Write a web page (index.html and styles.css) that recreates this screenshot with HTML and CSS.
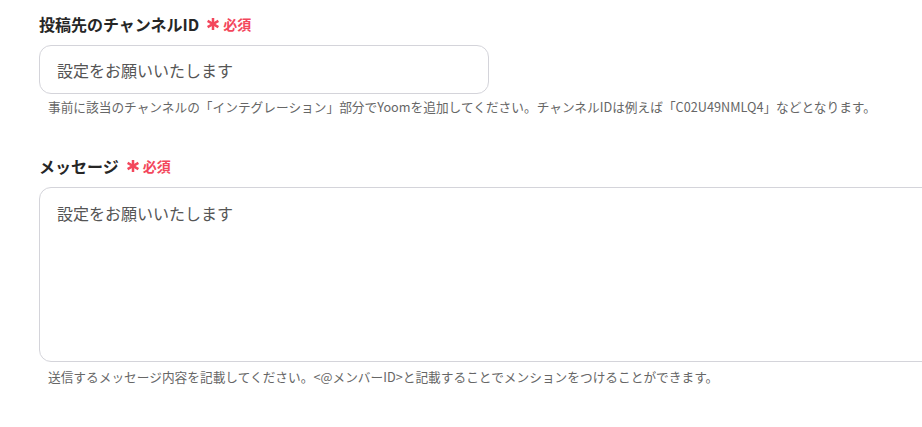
FILE: index.html
```html
<!DOCTYPE html>
<html lang="ja">
<head>
<meta charset="utf-8">
<link rel="stylesheet" href="styles.css">
</head>
<body>
<main class="form">
  <section class="field">
    <div class="label">
      <span class="label-text">投稿先のチャンネルID</span>
      <span class="req">
        <svg class="ast" viewBox="0 0 12 12" width="12" height="12"><g stroke="currentColor" stroke-width="2.5" stroke-linecap="butt"><line x1="6" y1="0" x2="6" y2="12"/><line x1="0.6" y1="2.9" x2="11.4" y2="9.1"/><line x1="0.6" y1="9.1" x2="11.4" y2="2.9"/></g></svg>
        <span class="req-text">必須</span>
      </span>
    </div>
    <div class="input">設定をお願いいたします</div>
    <p class="help">事前に該当のチャンネルの「インテグレーション」部分でYoomを追加してください。チャンネルIDは例えば「C02U49NMLQ4」などとなります。</p>
  </section>
  <section class="field">
    <div class="label">
      <span class="label-text">メッセージ</span>
      <span class="req">
        <svg class="ast" viewBox="0 0 12 12" width="12" height="12"><g stroke="currentColor" stroke-width="2.5" stroke-linecap="butt"><line x1="6" y1="0" x2="6" y2="12"/><line x1="0.6" y1="2.9" x2="11.4" y2="9.1"/><line x1="0.6" y1="9.1" x2="11.4" y2="2.9"/></g></svg>
        <span class="req-text">必須</span>
      </span>
    </div>
    <div class="textarea">設定をお願いいたします</div>
    <p class="help help-2">送信するメッセージ内容を記載してください。&lt;@メンバーID&gt;と記載することでメンションをつけることができます。</p>
  </section>
</main>
</body>
</html>
```

FILE: styles.css
```css
* { box-sizing: border-box; }
html, body { margin: 0; padding: 0; background: #fff; }
body {
  font-family: "Noto Sans CJK JP", "Noto Sans", sans-serif;
  color: #333;
  overflow: hidden;
}
.form {
  padding: 12px 0 0 39px;
}
.field + .field { margin-top: 38px; }
.label {
  display: flex;
  align-items: center;
  height: 24px;
  margin-bottom: 9px;
}
.label-text {
  font-size: 16px;
  font-weight: 700;
  color: #262626;
  line-height: 24px;
}
.req {
  display: flex;
  align-items: center;
  margin-left: 8px;
  color: #f3475c;
}
.ast { display: block; }
.req-text {
  font-size: 14px;
  font-weight: 700;
  margin-left: 4px;
  line-height: 24px;
}
.input {
  width: 450px;
  height: 49px;
  border: 1px solid #d4d4da;
  border-radius: 12px;
  padding: 0 17px;
  display: flex;
  align-items: center;
  font-size: 16px;
  color: #555;
}
.textarea {
  margin-right: -40px;
  height: 175px;
  border: 1px solid #d4d4da;
  border-radius: 12px;
  padding: 12px 17px;
  font-size: 16px;
  line-height: 26px;
  color: #555;
}
.help {
  margin: 4px 0 0 9px;
  font-size: 12.7px;
  line-height: 18px;
  color: #666;
}
.help-2 { margin-top: 6px; }
```
